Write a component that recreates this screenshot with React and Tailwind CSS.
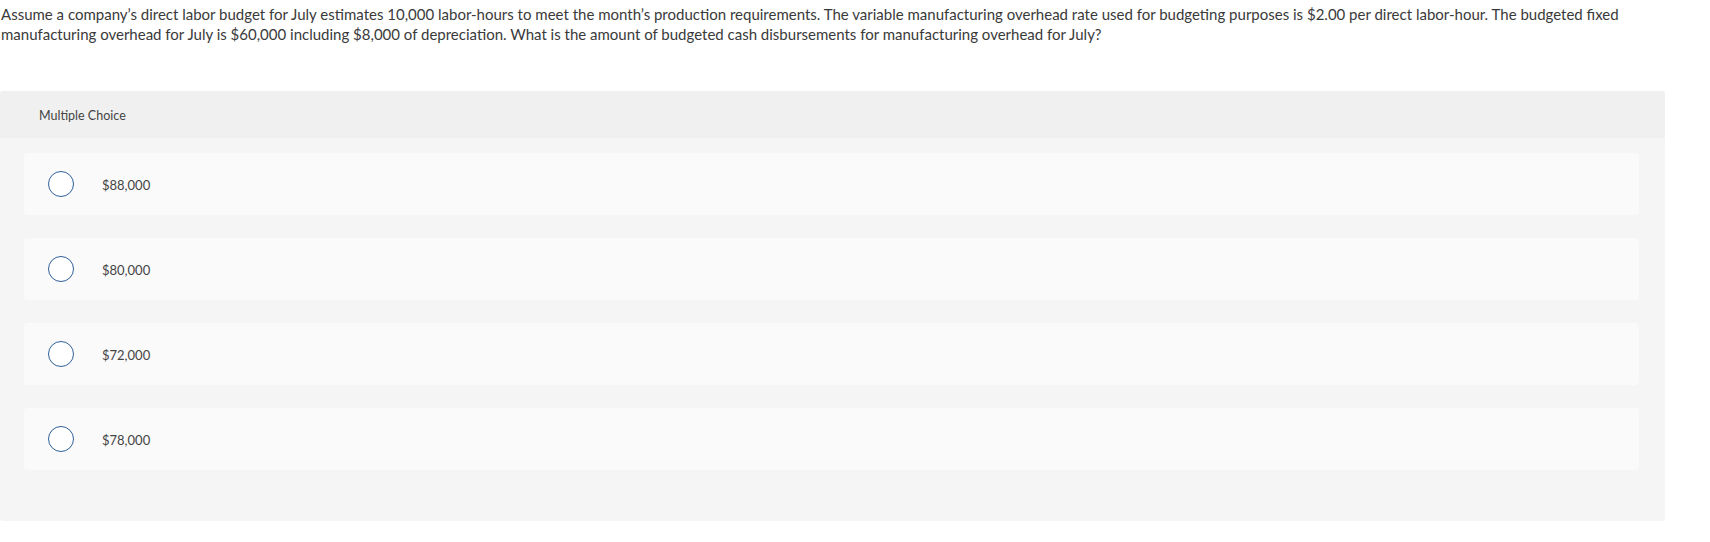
const options = ['$88,000', '$80,000', '$72,000', '$78,000']

export default function App() {
  return (
    <div className="min-h-screen bg-white text-[#3a3a3a] font-['Lato','Open_Sans',sans-serif]">
      <p className="pl-[1px] pt-[4px] text-[15px] leading-[20px] max-w-[1640px]">
        Assume a company’s direct labor budget for July estimates 10,000 labor-hours to meet the month’s production requirements. The variable manufacturing overhead rate used for budgeting purposes is $2.00 per direct labor-hour. The budgeted fixed manufacturing overhead for July is $60,000 including $8,000 of depreciation. What is the amount of budgeted cash disbursements for manufacturing overhead for July?
      </p>

      <div className="mt-[47px] w-[1665px] bg-[#f5f5f5] rounded-[3px] overflow-hidden">
        {/* header */}
        <div className="h-[47px] bg-[#f0f0f0] flex items-center pl-[39px] pt-[3px] text-[12.5px] text-[#444]">
          Multiple Choice
        </div>

        <div className="pt-[15px] pb-[51px] pl-[24px] pr-[26px] flex flex-col gap-[23px]">
          {options.map((o, i) => (
            <label key={i} className="h-[62px] bg-[#fafafa] rounded-[4px] flex items-center cursor-pointer">
              <span className="ml-[24px] w-[26px] h-[26px] rounded-full border-[1.5px] border-[#2e6099] bg-white flex-shrink-0" />
              <span className="ml-[28px] pt-[3px] text-[13px] text-[#444]">{o}</span>
            </label>
          ))}
        </div>
      </div>
    </div>
  )
}
